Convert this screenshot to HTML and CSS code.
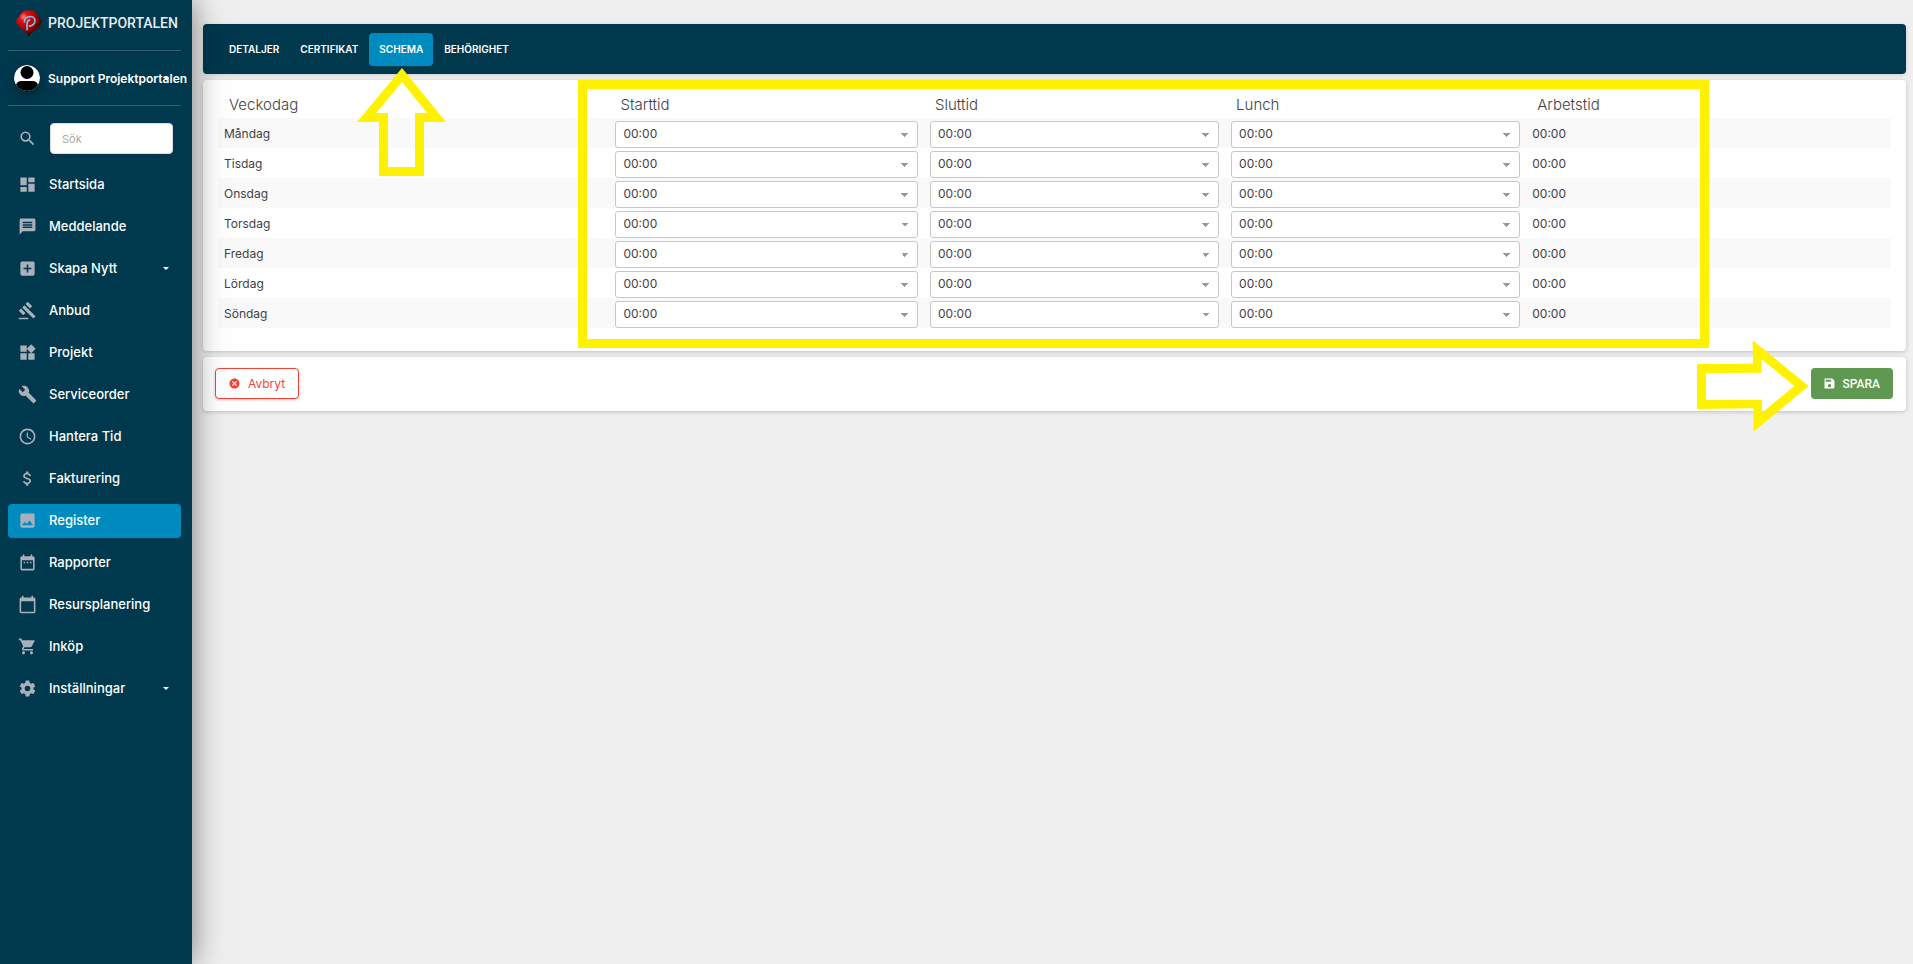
FILE: index.html
```html
<!DOCTYPE html>
<html lang="sv">
<head>
<meta charset="utf-8">
<meta name="viewport" content="width=device-width, initial-scale=1">
<title>Projektportalen</title>
<link rel="stylesheet" href="styles.css">
</head>
<body>
<aside class="sidebar">
  <a class="brand" href="#">
    <svg class="brand-logo" viewBox="0 0 78 80" aria-hidden="true">
      <defs>
        <radialGradient id="gem" cx="30%" cy="25%" r="80%">
          <stop offset="0" stop-color="#ff8a80"/><stop offset=".2" stop-color="#e81010"/><stop offset=".6" stop-color="#a80000"/><stop offset="1" stop-color="#100"/>
        </radialGradient>
      </defs>
      <path d="M28 1h22q6 1 10 7l16 22q3 5-1 9Q66 56 50 65q-7 6-12 14-4-9-11-14Q12 56 2 39q-4-5 0-9L17 8q5-6 11-7z" fill="url(#gem)"/>
      <path d="M25 35q2-15 17-16 14 0 15 12 0 14-17 17M33 59V42q0-10 8-13" fill="none" stroke="#6cc4ee" stroke-width="5" stroke-linecap="round"/>
    </svg>
    <span>PROJEKTPORTALEN</span>
  </a>
  <button class="user" type="button">
    <svg class="avatar" viewBox="0 0 26 26" aria-hidden="true">
      <defs><clipPath id="disc"><circle cx="13" cy="13" r="13"/></clipPath></defs>
      <g clip-path="url(#disc)"><path fill="#fff" d="M0 0h26v26H0z"/><circle cx="13" cy="7.500" r="6.500"/><path d="M2 26v-5q0-5 6-5h10q6 0 6 5v5z"/></g>
    </svg>
    <span class="user-name">Support Projektportalen</span>
    <i class="caret user-caret"></i>
  </button>
  <label class="search">
    <svg class="icon" viewBox="0 0 24 24" role="img" aria-label="Sök"><path d="M15.500 14h-.79l-.28-.27A6.470 6.470 0 0 0 16 9.500 6.500 6.500 0 1 0 9.500 16c1.610 0 3.090-.59 4.230-1.570l.27.28v.79l5 4.990L20.490 19l-4.990-5zm-6 0C7.010 14 5 11.990 5 9.500S7.010 5 9.500 5 14 7.010 14 9.500 11.990 14 9.500 14z"/></svg>
    <input class="search-input" type="text" placeholder="Sök">
  </label>
  <nav class="menu">
    <a class="item" href="#"><svg class="icon" viewBox="0 0 24 24"><path d="M3 13h8V3H3v10zm0 8h8v-6H3v6zm10 0h8V11h-8v10zm0-18v6h8V3h-8z"/></svg>Startsida</a>
    <a class="item" href="#"><svg class="icon" viewBox="0 0 24 24"><path d="M20 2H4c-1.100 0-1.990.9-1.990 2L2 22l4-4h14c1.100 0 2-.9 2-2V4c0-1.100-.9-2-2-2zm-2 12H6v-2h12v2zm0-3H6V9h12v2zm0-3H6V6h12v2z"/></svg>Meddelande</a>
    <a class="item" href="#"><svg class="icon" viewBox="0 0 24 24"><path d="M19 3H5a2 2 0 0 0-2 2v14c0 1.100.89 2 2 2h14c1.100 0 2-.9 2-2V5c0-1.100-.9-2-2-2zm-2 10h-4v4h-2v-4H7v-2h4V7h2v4h4v2z"/></svg>Skapa Nytt<i class="caret"></i></a>
    <a class="item" href="#"><svg class="icon" viewBox="0 0 24 24"><path d="M1 21h12v2H1zM5.245 8.070l2.830-2.827 14.140 14.142-2.828 2.828zM12.317 1l5.657 5.656-2.830 2.830-5.654-5.660zM3.825 9.485l5.657 5.657-2.828 2.828-5.657-5.657z"/></svg>Anbud</a>
    <a class="item" href="#"><svg class="icon" viewBox="0 0 24 24"><path d="M13 13v8h8v-8h-8zM3 21h8v-8H3v8zM3 3v8h8V3H3zm13.660-1.310L11 7.340 16.660 13l5.660-5.660-5.660-5.650z"/></svg>Projekt</a>
    <a class="item" href="#"><svg class="icon" viewBox="0 0 24 24"><path d="M22.700 19l-9.100-9.100c.9-2.300.4-5-1.500-6.900-2-2-5-2.400-7.400-1.300L9 6 6 9 1.600 4.700C.4 7.100.9 10.100 2.900 12.100c1.900 1.900 4.600 2.400 6.900 1.500l9.100 9.100c.4.4 1 .4 1.400 0l2.300-2.300c.5-.4.5-1.100.1-1.400z"/></svg>Serviceorder</a>
    <a class="item" href="#"><svg class="icon" viewBox="0 0 24 24"><path d="M11.990 2C6.470 2 2 6.480 2 12s4.470 10 9.990 10C17.520 22 22 17.520 22 12S17.520 2 11.990 2zM12 20a8 8 0 1 1 0-16 8 8 0 0 1 0 16zm.5-13H11v6l5.250 3.150.75-1.230-4.500-2.670z"/></svg>Hantera Tid</a>
    <a class="item" href="#"><svg class="icon" viewBox="0 0 24 24"><path d="M11.800 10.900c-2.270-.59-3-1.200-3-2.150 0-1.090 1.010-1.850 2.700-1.850 1.780 0 2.440.85 2.500 2.100h2.210c-.07-1.720-1.120-3.300-3.210-3.810V3h-3v2.160c-1.940.42-3.500 1.680-3.500 3.610 0 2.310 1.910 3.460 4.700 4.130 2.500.6 3 1.480 3 2.410 0 .69-.49 1.790-2.700 1.790-2.060 0-2.870-.92-2.980-2.100h-2.200c.12 2.190 1.760 3.420 3.680 3.830V21h3v-2.150c1.950-.37 3.500-1.500 3.500-3.550 0-2.840-2.430-3.810-4.700-4.400z"/></svg>Fakturering</a>
    <a class="item item-active" href="#" aria-current="page"><svg class="icon" viewBox="0 0 24 24"><path d="M21 19V5c0-1.100-.9-2-2-2H5c-1.100 0-2 .9-2 2v14c0 1.100.9 2 2 2h14c1.100 0 2-.9 2-2zM8.500 13.500l2.500 3.010L14.500 12l4.500 6H5l3.500-4.500z"/></svg>Register</a>
    <a class="item" href="#"><svg class="icon" viewBox="0 0 24 24"><path d="M9 11H7v2h2v-2zm4 0h-2v2h2v-2zm4 0h-2v2h2v-2zm2-7h-1V2h-2v2H8V2H6v2H5c-1.110 0-1.990.9-1.990 2L3 20a2 2 0 0 0 2 2h14c1.100 0 2-.9 2-2V6c0-1.100-.9-2-2-2zm0 16H5V9h14v11z"/></svg>Rapporter</a>
    <a class="item" href="#"><svg class="icon" viewBox="0 0 24 24"><path d="M20 3h-1V1h-2v2H7V1H5v2H4c-1.100 0-2 .9-2 2v16c0 1.100.9 2 2 2h16c1.100 0 2-.9 2-2V5c0-1.100-.9-2-2-2zm0 18H4V8h16v13z"/></svg>Resursplanering</a>
    <a class="item" href="#"><svg class="icon" viewBox="0 0 24 24"><path d="M7 18c-1.100 0-1.990.9-1.990 2S5.900 22 7 22s2-.9 2-2-.9-2-2-2zM1 2v2h2l3.600 7.590-1.350 2.450c-.16.28-.25.61-.25.96 0 1.100.9 2 2 2h12v-2H7.420c-.14 0-.25-.11-.25-.25l.03-.12.9-1.630h7.450c.75 0 1.410-.41 1.750-1.030l3.580-6.490A1 1 0 0 0 20 4H5.210l-.94-2H1zm16 16c-1.100 0-1.990.9-1.990 2s.89 2 1.990 2 2-.9 2-2-.9-2-2-2z"/></svg>Inköp</a>
    <a class="item" href="#"><svg class="icon" viewBox="0 0 24 24"><path d="M19.430 12.980c.04-.32.07-.64.07-.98s-.03-.66-.07-.98l2.110-1.650c.19-.15.24-.42.12-.64l-2-3.460c-.12-.22-.39-.3-.61-.22l-2.490 1c-.52-.4-1.080-.73-1.690-.98l-.38-2.650A.488.488 0 0 0 14 2h-4c-.25 0-.46.18-.49.42l-.38 2.650c-.61.25-1.170.59-1.690.98l-2.490-1c-.23-.09-.49 0-.61.22l-2 3.460c-.13.22-.07.49.12.64l2.110 1.650c-.04.32-.07.65-.07.98s.03.66.07.98l-2.110 1.650c-.19.15-.24.42-.12.64l2 3.460c.12.22.39.3.61.22l2.490-1c.52.4 1.080.73 1.690.98l.38 2.650c.03.24.24.42.49.42h4c.25 0 .46-.18.49-.42l.38-2.650c.61-.25 1.170-.59 1.690-.98l2.490 1c.23.09.49 0 .61-.22l2-3.460c.12-.22.07-.49-.12-.64l-2.110-1.650zM12 15.500a3.500 3.500 0 1 1 0-7 3.500 3.500 0 0 1 0 7z"/></svg>Inställningar<i class="caret"></i></a>
  </nav>
</aside>

<main class="content">
  <nav class="tabs">
    <a class="tab" href="#">DETALJER</a>
    <a class="tab" href="#">CERTIFIKAT</a>
    <a class="tab tab-active" href="#" aria-current="page">SCHEMA
      <svg class="arrow-up" viewBox="358 68 89 108" aria-hidden="true"><path fill-rule="evenodd" d="M403 68l44 54h-22v54h-45v-54h-22zM403 82l-26 31h12v54h27v-54h12z"/></svg>
    </a>
    <a class="tab" href="#">BEHÖRIGHET</a>
  </nav>

  <section class="card schedule">
    <table class="table">
      <thead>
        <tr><th class="col-day">Veckodag</th><th class="col-start">Starttid</th><th class="col-time">Sluttid</th><th class="col-time">Lunch</th><th>Arbetstid</th></tr>
      </thead>
      <tbody>
        <tr><td>Måndag</td><td><select class="time" aria-label="Starttid måndag"><option>00:00</option></select></td><td><select class="time" aria-label="Sluttid måndag"><option>00:00</option></select></td><td><select class="time" aria-label="Lunch måndag"><option>00:00</option></select></td><td>00:00</td></tr>
        <tr><td>Tisdag</td><td><select class="time" aria-label="Starttid tisdag"><option>00:00</option></select></td><td><select class="time" aria-label="Sluttid tisdag"><option>00:00</option></select></td><td><select class="time" aria-label="Lunch tisdag"><option>00:00</option></select></td><td>00:00</td></tr>
        <tr><td>Onsdag</td><td><select class="time" aria-label="Starttid onsdag"><option>00:00</option></select></td><td><select class="time" aria-label="Sluttid onsdag"><option>00:00</option></select></td><td><select class="time" aria-label="Lunch onsdag"><option>00:00</option></select></td><td>00:00</td></tr>
        <tr><td>Torsdag</td><td><select class="time" aria-label="Starttid torsdag"><option>00:00</option></select></td><td><select class="time" aria-label="Sluttid torsdag"><option>00:00</option></select></td><td><select class="time" aria-label="Lunch torsdag"><option>00:00</option></select></td><td>00:00</td></tr>
        <tr><td>Fredag</td><td><select class="time" aria-label="Starttid fredag"><option>00:00</option></select></td><td><select class="time" aria-label="Sluttid fredag"><option>00:00</option></select></td><td><select class="time" aria-label="Lunch fredag"><option>00:00</option></select></td><td>00:00</td></tr>
        <tr><td>Lördag</td><td><select class="time" aria-label="Starttid lördag"><option>00:00</option></select></td><td><select class="time" aria-label="Sluttid lördag"><option>00:00</option></select></td><td><select class="time" aria-label="Lunch lördag"><option>00:00</option></select></td><td>00:00</td></tr>
        <tr><td>Söndag</td><td><select class="time" aria-label="Starttid söndag"><option>00:00</option></select></td><td><select class="time" aria-label="Sluttid söndag"><option>00:00</option></select></td><td><select class="time" aria-label="Lunch söndag"><option>00:00</option></select></td><td>00:00</td></tr>
      </tbody>
    </table>
    <div class="highlight" aria-hidden="true"></div>
  </section>

  <section class="card actions">
    <button class="btn btn-cancel" type="button"><svg class="btn-icon" viewBox="0 0 24 24" aria-hidden="true"><path d="M12 1C5.900 1 1 5.900 1 12s4.900 11 11 11 11-4.900 11-11S18.100 1 12 1zm5.500 14.700l-1.800 1.800L12 13.800l-3.700 3.700-1.800-1.800 3.700-3.700-3.700-3.700 1.800-1.800 3.700 3.700 3.700-3.700 1.800 1.800-3.700 3.700z"/></svg>Avbryt</button>
    <div class="save">
      <button class="btn btn-save" type="button"><svg class="btn-icon" viewBox="2 2 20 20" aria-hidden="true"><path d="M17 3H3v18h16c1.100 0 2-.9 2-2V7l-4-4zm-5 16a3 3 0 1 1 0-6 3 3 0 0 1 0 6zm3-10H5V5h10v4z"/></svg>SPARA</button>
      <svg class="arrow-right" viewBox="111 121 336 274" aria-hidden="true"><path fill-rule="evenodd" d="M111 192l168-1-1-70 168 137-165 137-1-70-169 2zM138 219v81l168-1v39l97-80-98-80v40z"/></svg>
    </div>
  </section>
</main>
</body>
</html>
```

FILE: styles.css
```css
* { box-sizing: border-box; }

body {
  margin: 0;
  min-height: 100vh;
  display: flex;
  background: #efefef;
  color: #3f3f46;
  font-family: Inter, "Open Sans", sans-serif;
  font-size: 12px;
}

a { color: inherit; text-decoration: none; }
button, input, select { font: inherit; }

/* Sidebar */
.sidebar {
  position: relative;
  flex: 0 0 192px;
  min-width: 0;
  padding: 0 11px 0 8px;
  background: #00384d;
  color: #fff;
  font-size: 13px;
  box-shadow: 0 0 30px rgba(0, 0, 0, .5);
  z-index: 1;
}

.brand {
  display: flex;
  align-items: center;
  gap: 6px;
  height: 51px;
  padding: 0 0 4px 8px;
  border-bottom: 1px solid #335f70;
  font-family: Roboto, Inter, sans-serif;
  font-size: 14px;
  font-weight: 500;
  color: #e6ecef;
}

.brand-logo { flex: none; width: 26px; height: 27px; }

.user {
  position: relative;
  display: flex;
  align-items: center;
  gap: 8px;
  width: 100%;
  height: 55px;
  padding: 0 0 0 6px;
  border: 0;
  border-bottom: 1px solid #335f70;
  background: none;
  color: #fff;
  font-size: 12px;
  font-weight: 600;
  white-space: nowrap;
}

.avatar {
  flex: none;
  width: 26px;
  height: 26px;
  border-radius: 50%;
  box-shadow: 0 4px 10px rgba(0, 0, 0, .35);
}

.caret {
  margin-left: auto;
  border: 3px solid transparent;
  border-top-color: #fff;
  border-bottom: 0;
}

.user-caret { position: absolute; right: 12px; top: 26px; }

.search {
  display: flex;
  align-items: center;
  gap: 13px;
  margin: 17px 8px 14px 10px;
}

.search-input {
  flex: 1;
  min-width: 0;
  height: 31px;
  padding: 0 11px;
  border: 1px solid #ddd;
  border-radius: 4px;
  background: #fff;
  font-size: 11px;
}

.search-input::placeholder { color: #aaa; opacity: 1; }

.icon { flex: none; width: 19px; height: 19px; fill: #a9afbb; }

.menu { display: grid; gap: 8px; }

.item {
  display: flex;
  align-items: center;
  gap: 12px;
  height: 34px;
  padding: 0 12px 2px 10px;
  border-radius: 4px;
  font-weight: 500;
}

.item-active { background: #008bc0; }

/* Main column */
.content {
  flex: 1;
  min-width: 0;
  display: flex;
  flex-direction: column;
  gap: 6px;
  padding: 24px 7px 24px 11px;
}

.tabs {
  display: flex;
  gap: 1px;
  padding: 9px 16px 8px;
  border-radius: 4px;
  background: #00384d;
  color: #fff;
  box-shadow: 0 1px 4px rgba(0, 0, 0, .14);
}

.tab {
  position: relative;
  padding: 0 10px 1px;
  border-radius: 4px;
  font-size: 10px;
  line-height: 32px;
  font-weight: 600;
}

.tab-active { background: #008bc0; }

.card {
  position: relative;
  border-radius: 4px;
  background: #fff;
  box-shadow: 0 1px 4px rgba(0, 0, 0, .2);
}

.schedule { padding: 12px 15px 23px; }

.table { width: 100%; border-collapse: collapse; table-layout: fixed; }

.table th {
  height: 26px;
  padding: 0 11px;
  font-size: 15px;
  line-height: 20px;
  font-weight: 300;
  text-align: left;
}

.table td { height: 30px; padding: 0 6px; font-size: 12px; }
.table td:has(.time) { padding-top: 3px; }
.table tbody tr:nth-child(odd) { background: #f9f9f9; }

.col-day { width: 23.4%; }
.col-start { width: 18.8%; }
.col-time { width: 18%; }

.time {
  display: block;
  width: 100%;
  height: 27px;
  padding: 0 8px 3px 7px;
  border: 1px solid #c8c8c8;
  border-radius: 3px;
  appearance: none;
  color: inherit;
  background:
    conic-gradient(from -45deg at 50% 100%, #999 90deg, transparent 0) right 8px top 11px / 8px 4px no-repeat,
    #fff;
  background:
    linear-gradient(to bottom left, #999 50%, transparent 50%) right 12px top 11px / 4px 4px no-repeat,
    linear-gradient(to bottom right, #999 50%, transparent 50%) right 8px top 11px / 4px 4px no-repeat,
    #fff;
}

.actions {
  display: flex;
  justify-content: space-between;
  padding: 11px 13px 12px 12px;
}

.btn {
  display: flex;
  align-items: center;
  gap: 8px;
  height: 31px;
  padding: 0 13px;
  border: 1px solid transparent;
  border-radius: 4px;
}

.btn-icon { width: 11px; height: 11px; fill: currentColor; }

.btn-cancel {
  border-color: #f44336;
  background: #fff;
  color: #f44336;
  font-size: 12px;
  box-shadow: 0 1px 3px rgba(0, 0, 0, .2);
}

.btn-save {
  padding: 0 12px;
  background: #5f9850;
  color: #fff;
  font-family: Roboto, Inter, sans-serif;
  font-weight: 500;
  font-size: 12px;
}

.save { position: relative; }

/* Guide marks laid over the page */
.highlight {
  position: absolute;
  inset: 0 197px 3px 22%;
  border: 9px solid #fff200;
  pointer-events: none;
}

.arrow-up, .arrow-right { position: absolute; fill: #fff200; pointer-events: none; }
.arrow-up { z-index: 2; left: 50%; top: 35px; width: 89px; height: 108px; margin-left: -44px; }
.arrow-right { right: 100%; top: -28px; width: 112px; height: 92px; margin-right: 2px; }
```
